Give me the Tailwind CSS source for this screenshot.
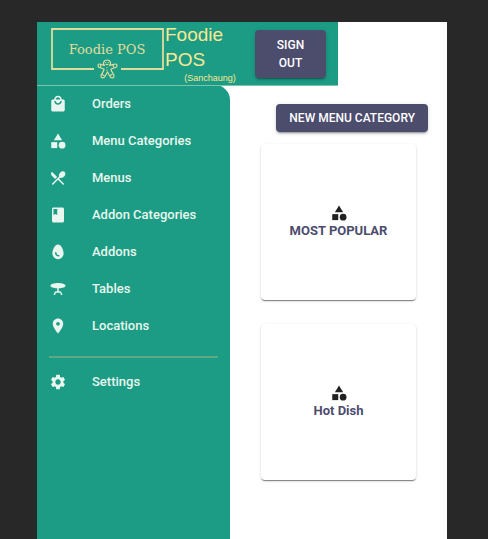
<!DOCTYPE html>
<html lang="en">
<head>
<meta charset="utf-8">
<meta name="viewport" content="width=device-width, initial-scale=1">
<title>Foodie POS</title>
<script src="https://cdn.jsdelivr.net/npm/@tailwindcss/browser@4"></script>
</head>
<body class="bg-[#282828] font-['Liberation_Sans',Arial,sans-serif]">
<svg class="hidden" aria-hidden="true">
  <symbol id="category" viewBox="0 0 24 24"><path d="m12 2-5.500 9h11z"/><circle cx="17.500" cy="17.500" r="4.500"/><path d="M3 13.500h8v8H3z"/></symbol>
</svg>
<div class="flex min-h-screen flex-col pt-[22px] pr-[41px] pl-[37px]">
  <div class="flex flex-1 flex-col bg-white">
    <header class="relative z-10 -mb-px box-content flex h-[63px] w-[301px] border-b border-[#7cc2ad] bg-[#1c9c84]">
      <svg class="mt-1.5 ml-3.5 h-[52px] w-[113px] shrink-0" viewBox="0 0 113 52" fill="none" stroke="#e2dc9c" role="img" aria-label="Foodie POS logo">
        <path d="M43 41H1V1h111v40H70" stroke-width="1.800"/>
        <text x="56" y="26" text-anchor="middle" fill="#e2dc9c" stroke="none" font-family="'DejaVu Serif', serif" font-size="13">Foodie POS</text>
        <g stroke-width="1.200" stroke-linejoin="round" stroke-linecap="round">
          <path d="M53.500 37.500c-2-2-1-5.500 2.500-5.500s4.500 3.500 2.500 5.500c2-.2 4.500-1.500 6-1.500 2 0 2 3 0 3.500l-4.500 1.500c0 3 3 4.500 3 7 0 2.500-3 2.500-4 .5l-2.500-4.500-2.500 4.500c-1 2-4 2-4-.5 0-2.500 3-4 3-7l-4.500-1.500c-2-.5-2-3.500 0-3.500 1.500 0 4 1.300 5 1.500z"/>
          <path d="M54.700 34.500h.1M57.300 34.500h.1M56 39.500v.1M56 42.200v.1M55 36.300q1 .6 2 0M50 36.500l-.6 2.500M62 36.500l.6 2.500M51 46.500l2 1M61 46.500l-2 1"/>
        </g>
      </svg>
      <div class="flex w-[91px] shrink-0 flex-col pl-px text-[#fbe794]">
        <h1 class="w-[72px] text-[19px] leading-[25px]">Foodie POS</h1>
        <p class="text-center text-[9px] leading-3">(Sanchaung)</p>
      </div>
      <button type="button" class="mt-2 mr-3 h-12 flex-1 rounded bg-[#4c4c6d] px-4 font-['Roboto','Liberation_Sans',sans-serif] text-xs leading-[18px] font-medium text-white shadow-[0_3px_1px_-2px_rgba(0,0,0,0.2),0_2px_2px_0_rgba(0,0,0,0.14),0_1px_5px_0_rgba(0,0,0,0.12)]">SIGN OUT</button>
    </header>
    <div class="flex flex-1">
      <nav class="w-[193px] shrink-0 rounded-tr-[15px] bg-[#1c9c84] font-['Roboto','Liberation_Sans',sans-serif] text-[13px] font-medium text-[#e8f6ef]">
        <ul>
          <li><a href="#orders" class="flex h-[37px] items-center gap-[25px] px-3"><svg class="size-[18px] shrink-0" viewBox="0 0 24 24" fill="currentColor"><path d="M19 6h-2c0-2.760-2.240-5-5-5S7 3.240 7 6H5c-1.100 0-1.990.9-1.990 2L3 20c0 1.100.9 2 2 2h14c1.100 0 2-.9 2-2V8c0-1.100-.9-2-2-2m-7-3c1.660 0 3 1.340 3 3H9c0-1.660 1.340-3 3-3m0 10c-2.760 0-5-2.240-5-5h2c0 1.660 1.340 3 3 3s3-1.340 3-3h2c0 2.760-2.240 5-5 5"/></svg><span>Orders</span></a></li>
          <li><a href="#menu-categories" class="flex h-[37px] items-center gap-[25px] px-3"><svg class="size-[18px] shrink-0" fill="currentColor"><use href="#category"/></svg><span>Menu Categories</span></a></li>
          <li><a href="#menus" class="flex h-[37px] items-center gap-[25px] px-3"><svg class="size-[18px] shrink-0" viewBox="0 0 24 24" fill="currentColor"><path d="m8.100 13.340 2.830-2.830L3.910 3.500c-1.560 1.560-1.560 4.090 0 5.660zm6.780-1.810c1.530.71 3.680.21 5.270-1.380 1.910-1.910 2.280-4.650.81-6.120-1.460-1.460-4.200-1.100-6.120.81-1.590 1.590-2.090 3.740-1.380 5.270L3.700 19.870l1.410 1.410L12 14.410l6.880 6.880 1.410-1.410L13.410 13z"/></svg><span>Menus</span></a></li>
          <li><a href="#addon-categories" class="flex h-[37px] items-center gap-[25px] px-3"><svg class="size-[18px] shrink-0" viewBox="0 0 24 24" fill="currentColor"><path d="M18 2H6c-1.100 0-2 .9-2 2v16c0 1.100.9 2 2 2h12c1.100 0 2-.9 2-2V4c0-1.100-.9-2-2-2M6 4h5v8l-2.500-1.500L6 12z"/></svg><span>Addon Categories</span></a></li>
          <li><a href="#addons" class="flex h-[37px] items-center gap-[25px] px-3"><svg class="size-[18px] shrink-0" viewBox="0 0 24 24" fill="currentColor"><path d="M12 2C8 2 4.500 8.800 4.500 14a7.500 7.500 0 0 0 15 0C19.500 8.800 16 2 12 2m1 16c-3 0-5-1.990-5-5 0-.55.450-1 1-1s1 .45 1 1c0 2.920 2.420 3 3 3 .55 0 1 .45 1 1s-.45 1-1 1"/></svg><span>Addons</span></a></li>
          <li><a href="#tables" class="flex h-[37px] items-center gap-[25px] px-3"><svg class="size-[18px] shrink-0" viewBox="0 0 24 24" fill="currentColor"><path d="M22 7.500C22 5.570 17.520 4 12 4S2 5.570 2 7.500c0 1.810 3.950 3.300 9 3.480V15H9.350c-.82 0-1.550.5-1.860 1.260L6 20h2l1.200-3h5.600l1.200 3h2l-1.500-3.740c-.3-.76-1.040-1.260-1.850-1.260H13v-4.020c5.050-.18 9-1.670 9-3.480"/></svg><span>Tables</span></a></li>
          <li><a href="#locations" class="flex h-[37px] items-center gap-[25px] px-3"><svg class="size-[18px] shrink-0" viewBox="0 0 24 24" fill="currentColor"><path d="M12 2C8.130 2 5 5.130 5 9c0 5.250 7 13 7 13s7-7.750 7-13c0-3.870-3.130-7-7-7m0 9.500c-1.380 0-2.500-1.120-2.500-2.500s1.120-2.500 2.500-2.500 2.500 1.120 2.500 2.500-1.120 2.500-2.500 2.500"/></svg><span>Locations</span></a></li>
        </ul>
        <hr class="mx-3 mt-3 mb-[5px] border-t-2 border-[#60a881]">
        <a href="#settings" class="flex h-[37px] items-center gap-[25px] px-3"><svg class="size-[18px] shrink-0" viewBox="0 0 24 24" fill="currentColor"><path d="M19.140 12.940c.04-.3.060-.61.060-.94 0-.32-.02-.64-.07-.94l2.030-1.580c.18-.14.230-.41.120-.61l-1.920-3.320c-.12-.22-.37-.29-.59-.22l-2.390.96c-.5-.38-1.030-.7-1.620-.94l-.36-2.540c-.04-.24-.24-.41-.48-.41h-3.840c-.24 0-.43.170-.47.410l-.36 2.540c-.59.240-1.130.570-1.620.94l-2.390-.96c-.22-.08-.47 0-.59.220L2.740 8.870c-.12.210-.08.470.12.610l2.030 1.580c-.05.300-.09.630-.09.940s.02.640.07.940l-2.030 1.580c-.18.140-.23.410-.12.610l1.920 3.320c.12.220.37.290.59.220l2.390-.96c.5.380 1.030.7 1.620.94l.36 2.540c.05.240.24.410.48.410h3.840c.24 0 .44-.17.470-.41l.36-2.540c.59-.24 1.130-.56 1.620-.94l2.390.96c.22.080.47 0 .59-.22l1.920-3.320c.12-.22.070-.47-.12-.61zM12 15.600c-1.980 0-3.600-1.620-3.600-3.600s1.620-3.600 3.600-3.600 3.600 1.620 3.600 3.600-1.620 3.600-3.600 3.600"/></svg><span>Settings</span></a>
      </nav>
      <main class="flex min-w-0 flex-1 flex-col pt-[19px] pr-[19px] pl-[31px] font-['Roboto','Liberation_Sans',sans-serif]">
        <button type="button" class="h-7 self-end rounded bg-[#4c4c6d] px-[13px] text-xs font-medium text-white shadow-[0_3px_1px_-2px_rgba(0,0,0,0.2),0_2px_2px_0_rgba(0,0,0,0.14),0_1px_5px_0_rgba(0,0,0,0.12)]">NEW MENU CATEGORY</button>
        <div class="mt-3 flex flex-wrap gap-6 text-[13px] leading-[18px] font-bold text-[#4c4c6d]">
          <a href="#most-popular" class="flex h-[156px] w-[155px] flex-col items-center justify-center rounded-sm shadow-[0_2px_1px_-1px_rgba(0,0,0,0.3),0_1px_1px_0_rgba(0,0,0,0.2),0_1px_3px_0_rgba(0,0,0,0.14)]"><svg class="size-[18px]" fill="#212121"><use href="#category"/></svg><span>MOST POPULAR</span></a>
          <a href="#hot-dish" class="flex h-[156px] w-[155px] flex-col items-center justify-center rounded-sm shadow-[0_2px_1px_-1px_rgba(0,0,0,0.3),0_1px_1px_0_rgba(0,0,0,0.2),0_1px_3px_0_rgba(0,0,0,0.14)]"><svg class="size-[18px]" fill="#212121"><use href="#category"/></svg><span>Hot Dish</span></a>
        </div>
      </main>
    </div>
  </div>
</div>
</body>
</html>
